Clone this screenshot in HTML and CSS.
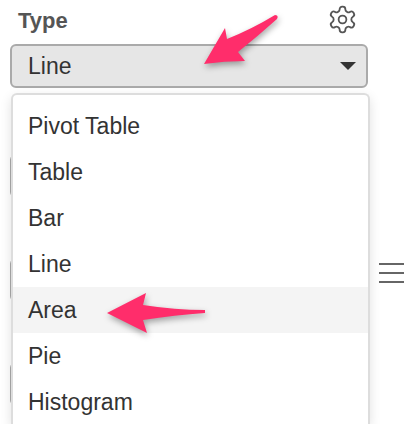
FILE: index.html
```html
<!DOCTYPE html>
<html lang="en">

<head>
    <meta charset="UTF-8">
    <title>Type</title>
    <link rel="stylesheet" href="styles.css">
</head>

<body>
    <main class="page">
        <section class="panel">
            <div class="head">
                <label class="title">Type</label>
                <svg class="gear" viewBox="0 0 24 24">
                    <path d="M12.22 2h-.44a2 2 0 0 0-2 2v.18a2 2 0 0 1-1 1.73l-.43.25a2 2 0 0 1-2 0l-.15-.08a2 2 0 0 0-2.73.73l-.22.38a2 2 0 0 0 .73 2.73l.15.1a2 2 0 0 1 1 1.72v.51a2 2 0 0 1-1 1.74l-.15.09a2 2 0 0 0-.73 2.73l.22.38a2 2 0 0 0 2.73.73l.15-.08a2 2 0 0 1 2 0l.43.25a2 2 0 0 1 1 1.73V20a2 2 0 0 0 2 2h.44a2 2 0 0 0 2-2v-.18a2 2 0 0 1 1-1.73l.43-.25a2 2 0 0 1 2 0l.15.08a2 2 0 0 0 2.73-.73l.22-.39a2 2 0 0 0-.73-2.73l-.15-.08a2 2 0 0 1-1-1.74v-.5a2 2 0 0 1 1-1.74l.15-.09a2 2 0 0 0 .73-2.73l-.22-.38a2 2 0 0 0-2.73-.73l-.15.08a2 2 0 0 1-2 0l-.43-.25a2 2 0 0 1-1-1.73V4a2 2 0 0 0-2-2z" />
                    <circle cx="12" cy="12" r="3" />
                </svg>
            </div>

            <div class="select">
                <span>Line</span>
                <span class="caret"></span>
            </div>

            <div class="behind">
                <div class="field"></div>
                <div class="field"></div>
                <div class="field"></div>
            </div>

            <ul class="menu">
                <li>Pivot Table</li>
                <li>Table</li>
                <li>Bar</li>
                <li>Line</li>
                <li class="active">Area</li>
                <li>Pie</li>
                <li>Histogram</li>
            </ul>
        </section>

        <div class="burger">
            <span></span>
            <span></span>
            <span></span>
        </div>
    </main>

    <svg class="arrows" viewBox="0 0 414 424">
        <path d="M204 64 L225 28 L227 39 Q252 29 275 15 Q279 15 277 19 Q258 36 238 52 L245 61 Q224 61 204 64z" />
        <path d="M107 313 L146 293 L143 305 Q175 310 205 310 L205 313 Q175 315 143 320 L147 333z" />
    </svg>
</body>

</html>
```

FILE: styles.css
```css
* {
    margin: 0;
    padding: 0;
    box-sizing: border-box;
}

body {
    width: 414px;
    height: 424px;
    overflow: hidden;
    background-color: white;
    font-family: "Liberation Sans", Arial, sans-serif;
    color: #333;
}

.page {
    display: flex;
    height: 424px;
    padding-left: 10px;
}

.panel {
    position: relative;
    width: 358px;
    flex-shrink: 0;
}

.head {
    display: flex;
    justify-content: space-between;
    align-items: center;
    height: 44px;
    padding-left: 8px;
    padding-right: 10px;
    padding-bottom: 6px;
}

.title {
    margin-top: 3px;
    font-size: 22px;
    font-weight: bold;
    color: #555;
}

.gear {
    width: 31px;
    height: 31px;
    fill: none;
    stroke: #555;
    stroke-width: 1.4;
}

.select {
    display: flex;
    justify-content: space-between;
    align-items: center;
    height: 44px;
    padding: 0 10px 0 16px;
    font-size: 23px;
    background-color: #e6e6e6;
    border: 2px solid #aaa;
    border-radius: 6px;
}

.caret {
    width: 0;
    height: 0;
    border-left: 8px solid transparent;
    border-right: 8px solid transparent;
    border-top: 8px solid #333;
}

.behind {
    display: flex;
    flex-direction: column;
    gap: 60px;
    padding-top: 66px;
}

.field {
    height: 44px;
    border: 2px solid #aaa;
    border-radius: 6px;
}

.menu {
    position: absolute;
    top: 93px;
    left: 1px;
    width: 359px;
    height: 331px;
    overflow: hidden;
    padding-top: 8px;
    list-style: none;
    font-size: 23px;
    background-color: white;
    border: 2px solid #ddd;
    border-bottom: none;
    border-radius: 6px 6px 0 0;
    box-shadow: 0 4px 12px rgba(0, 0, 0, 0.12);
}

.menu li {
    height: 46px;
    line-height: 46px;
    padding-left: 15px;
}

.menu .active {
    background-color: #f4f4f4;
}

.burger {
    display: flex;
    flex-direction: column;
    gap: 7px;
    width: 25px;
    margin-left: 11px;
    padding-top: 263px;
}

.burger span {
    height: 2px;
    background-color: #666;
}

.arrows {
    position: absolute;
    top: 0;
    left: 0;
    width: 414px;
    height: 424px;
    fill: #ff2d6b;
    filter: drop-shadow(1px 3px 3px rgba(0, 0, 0, 0.35));
}
```
